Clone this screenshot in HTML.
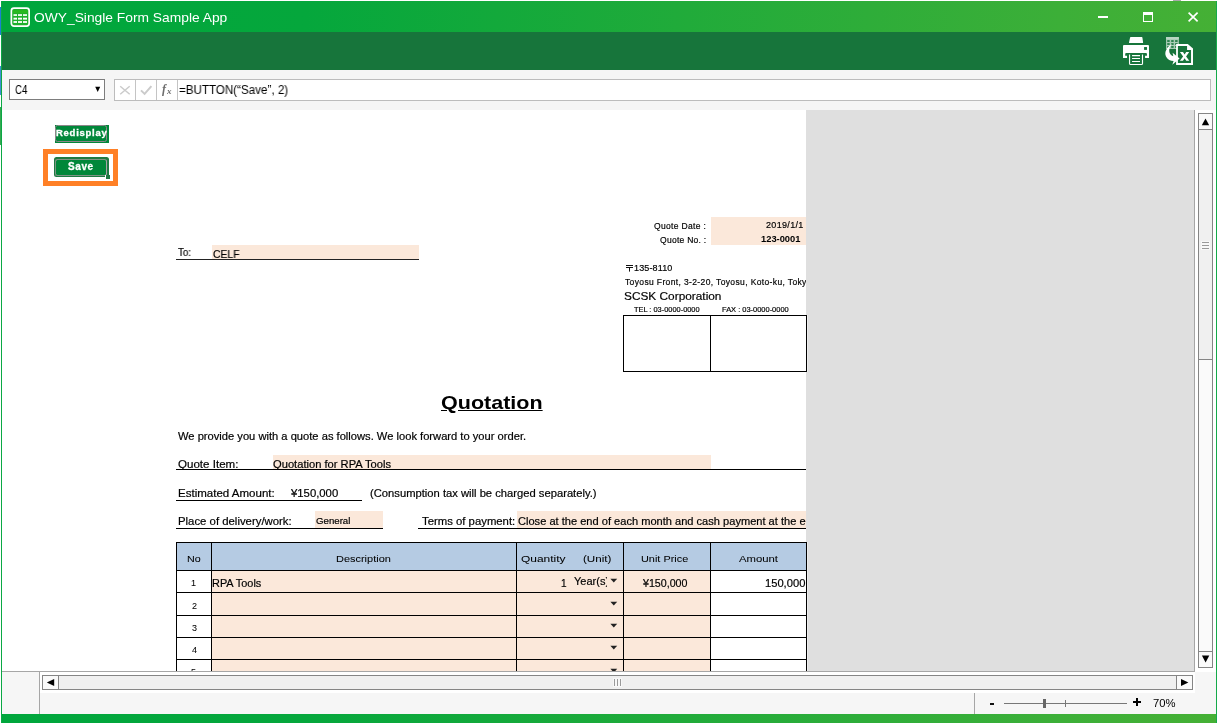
<!DOCTYPE html>
<html lang="en">
<head>
<meta charset="utf-8">
<title>OWY_Single Form Sample App</title>
<style>
html,body{margin:0;padding:0;}
body{width:1218px;height:725px;position:relative;overflow:hidden;background:#fff;
  font-family:"Liberation Sans",sans-serif;color:#000;}
.a{position:absolute;}
.t{position:absolute;white-space:nowrap;transform-origin:0 50%;display:block;will-change:transform;}
.clip{position:absolute;overflow:hidden;}
.clip .t{position:absolute;}
/* window chrome */
#title{left:1px;top:1px;width:1216px;height:31px;
  background:linear-gradient(to right,#00a63c 0%,#05a73c 25%,#3caf38 87%,#45b035 100%);}
#ribbon{left:2px;top:32px;width:1214px;height:38px;background:#17753b;}
#fbar{left:2px;top:70px;width:1214px;height:40px;background:#f5f5f5;}
#lborder{left:1px;top:1px;width:1px;height:722px;background:#0aa844;}
#rborder{left:1216px;top:1px;width:1px;height:722px;background:#14aa4a;}
#bottom{left:2px;top:672px;width:1214px;height:42px;background:#f6f6f6;}
#status{left:1px;top:714px;width:1216px;height:9px;
  background:linear-gradient(to right,#00a63c 0%,#05a73c 25%,#3caf38 87%,#45b035 100%);}
/* sheet */
#sheet{left:2px;top:110px;width:1192px;height:561px;overflow:hidden;background:#fff;}
#sheetin{left:-2px;top:-110px;width:1218px;height:725px;}
#gray{left:806px;top:110px;width:388px;height:561px;background:#dfdfdf;}
.pe{background:#fbe8da;}
.ln{background:#000;}
.sb{background:#fafafa;border:1px solid #858585;box-sizing:border-box;}
.th{background:#f0f0f0;border:1px solid #858585;box-sizing:border-box;}
</style>
</head>
<body>
<!-- ======================= sheet viewport ======================= -->
<div class="a" id="sheet"><div class="a" id="sheetin">

<!-- buttons -->
<div class="a" style="left:55px;top:125px;width:54px;height:18px;background:#01873a"></div>
<div class="a" style="left:55px;top:125px;width:52px;height:17px;box-sizing:border-box;border:1px solid #8d868a;border-radius:2.5px"></div>
<div class="a" style="left:43px;top:149px;width:75px;height:37px;box-sizing:border-box;border:5px solid #ff8026;background:#fff"></div>
<div class="a" style="left:53.5px;top:157.3px;width:55.8px;height:20.1px;background:#1f7a43;border-radius:2.5px"></div>
<div class="a" style="left:55px;top:159px;width:52.4px;height:17.2px;box-sizing:border-box;border:1px solid #7f9487;border-right-color:#a9a3a8;border-radius:2.5px;background:#01873a"></div>
<div class="a" style="left:105.4px;top:174.5px;width:5px;height:5px;background:#fff"></div>
<div class="a" style="left:106.2px;top:175.3px;width:3.8px;height:3.7px;background:#217844"></div>

<!-- To: -->
<div class="a pe" style="left:212px;top:245px;width:207px;height:14px"></div>
<div class="a ln" style="left:176px;top:259px;width:243px;height:1px;background:#222"></div>

<!-- quote date / no -->
<div class="a pe" style="left:711px;top:217px;width:96px;height:28px"></div>

<!-- stamp box -->
<div class="a" style="left:623px;top:315px;width:184px;height:57px;box-sizing:border-box;border:1px solid #000"></div>
<div class="a ln" style="left:710px;top:315px;width:1px;height:57px"></div>

<!-- quote item -->
<div class="a pe" style="left:273px;top:455px;width:438px;height:14px"></div>
<div class="a ln" style="left:176px;top:469px;width:631px;height:1px"></div>
<!-- estimated amount -->
<div class="a ln" style="left:176px;top:500px;width:186px;height:1px"></div>
<!-- place / terms -->
<div class="a pe" style="left:315px;top:511px;width:68px;height:17px"></div>
<div class="a ln" style="left:176px;top:528px;width:207px;height:1px"></div>
<div class="a pe" style="left:517px;top:511px;width:290px;height:17px"></div>
<div class="a ln" style="left:418px;top:528px;width:389px;height:1px"></div>

<!-- table fills -->
<div class="a" style="left:176px;top:542px;width:631px;height:29px;background:#b5cbe3"></div>
<div class="a pe" style="left:211px;top:570px;width:500px;height:120px"></div>
<!-- table lines: horizontal -->
<div class="a ln" style="left:176px;top:542px;width:631px;height:1px"></div>
<div class="a ln" style="left:176px;top:570px;width:631px;height:1px"></div>
<div class="a ln" style="left:176px;top:592px;width:631px;height:1px"></div>
<div class="a ln" style="left:176px;top:615px;width:631px;height:1px"></div>
<div class="a ln" style="left:176px;top:637px;width:631px;height:1px"></div>
<div class="a ln" style="left:176px;top:659px;width:631px;height:1px"></div>
<!-- table lines: vertical -->
<div class="a ln" style="left:176px;top:542px;width:1px;height:150px"></div>
<div class="a ln" style="left:211px;top:542px;width:1px;height:150px"></div>
<div class="a ln" style="left:516px;top:542px;width:1px;height:150px"></div>
<div class="a ln" style="left:623px;top:542px;width:1px;height:150px"></div>
<div class="a ln" style="left:710px;top:542px;width:1px;height:150px"></div>
<div class="a ln" style="left:806px;top:542px;width:1px;height:150px"></div>
<!-- dropdown arrows -->
<svg class="a" style="left:610px;top:578px" width="8" height="6" viewBox="0 0 8 6"><path d="M0.4 0.8 H7.2 L3.8 4.6 Z" fill="#222"/></svg>
<svg class="a" style="left:610px;top:601px" width="8" height="6" viewBox="0 0 8 6"><path d="M0.4 0.8 H7.2 L3.8 4.6 Z" fill="#222"/></svg>
<svg class="a" style="left:610px;top:623px" width="8" height="6" viewBox="0 0 8 6"><path d="M0.4 0.8 H7.2 L3.8 4.6 Z" fill="#222"/></svg>
<svg class="a" style="left:610px;top:645px" width="8" height="6" viewBox="0 0 8 6"><path d="M0.4 0.8 H7.2 L3.8 4.6 Z" fill="#222"/></svg>
<svg class="a" style="left:610px;top:668px" width="8" height="6" viewBox="0 0 8 6"><path d="M0.4 0.8 H7.2 L3.8 4.6 Z" fill="#222"/></svg>
<!-- postal mark -->
<svg class="a" style="left:625px;top:264px" width="9" height="8" viewBox="0 0 9 8"><path d="M1 1.5H8M1 3.5H8M4.5 3.5V7.6" stroke="#111" stroke-width="1" fill="none"/></svg>

<span class="t" id="t4" style="left:56.02px;top:127.76px;font-size:9.5px;line-height:9.5px;font-weight:700;color:#fff;-webkit-text-stroke:0.3px #fff;letter-spacing:0.731px">Redisplay</span>
<span class="t" id="t5" style="left:67.98px;top:161.53px;font-size:10px;line-height:10px;font-weight:700;color:#fff;-webkit-text-stroke:0.3px #fff;letter-spacing:0.600px">Save</span>
<span class="t" id="t6" style="left:177.52px;top:247.73px;font-size:10px;line-height:10px;-webkit-text-stroke:0.18px #000;transform:scaleX(0.9679)">To:</span>
<span class="t" id="t7" style="left:213.00px;top:249.11px;font-size:10.5px;line-height:10.5px;-webkit-text-stroke:0.18px #000;transform:scaleX(0.9843)">CELF</span>
<span class="t" id="t8" style="left:653.52px;top:221.70px;font-size:8.5px;line-height:8.5px;-webkit-text-stroke:0.18px #000;letter-spacing:0.327px">Quote Date :</span>
<span class="t" id="t9" style="left:660.00px;top:235.80px;font-size:8.5px;line-height:8.5px;-webkit-text-stroke:0.18px #000;letter-spacing:0.270px">Quote No. :</span>
<span class="t" id="t10" style="left:766.04px;top:221.48px;font-size:9px;line-height:9px;-webkit-text-stroke:0.18px #000;letter-spacing:0.321px">2019/1/1</span>
<span class="t" id="t11" style="left:761.16px;top:235.38px;font-size:9px;line-height:9px;font-weight:700;transform:scaleX(1.0368)">123-0001</span>
<span class="t" id="t12" style="left:634.06px;top:264.28px;font-size:9px;line-height:9px;-webkit-text-stroke:0.18px #000;letter-spacing:0.129px">135-8110</span>
<div class="clip" style="left:625.04px;top:275.60px;width:180.96px;height:14.5px"><span class="t" id="t13" style="left:0;top:2px;font-size:8.5px;line-height:8.5px;-webkit-text-stroke:0.18px #000;letter-spacing:0.366px">Toyosu Front, 3-2-20, Toyosu, Koto-ku, Tokyo</span></div>
<span class="t" id="t14" style="left:624.14px;top:290.66px;font-size:10.8px;line-height:10.8px;-webkit-text-stroke:0.18px #000;transform:scaleX(1.0972)">SCSK Corporation</span>
<span class="t" id="t15" style="left:634.00px;top:305.97px;font-size:7px;line-height:7px;-webkit-text-stroke:0.18px #000;transform:scaleX(1.0581)">TEL : 03-0000-0000</span>
<span class="t" id="t16" style="left:722.00px;top:305.97px;font-size:7px;line-height:7px;-webkit-text-stroke:0.18px #000;transform:scaleX(1.0644)">FAX : 03-0000-0000</span>
<span class="t" id="t17" style="left:441.14px;top:393.32px;font-size:19px;line-height:19px;font-weight:700;text-decoration:underline;transform:scaleX(1.1330)">Quotation</span>
<span class="t" id="t18" style="left:178.46px;top:432.24px;font-size:10px;line-height:10px;-webkit-text-stroke:0.18px #000;transform:scaleX(1.1157)">We provide you with a quote as follows. We look forward to your order.</span>
<span class="t" id="t19" style="left:178.00px;top:460.04px;font-size:10px;line-height:10px;-webkit-text-stroke:0.18px #000;transform:scaleX(1.1562)">Quote Item:</span>
<span class="t" id="t20" style="left:273.04px;top:460.04px;font-size:10px;line-height:10px;-webkit-text-stroke:0.18px #000;transform:scaleX(1.1157)">Quotation for RPA Tools</span>
<span class="t" id="t21" style="left:177.60px;top:489.14px;font-size:10px;line-height:10px;-webkit-text-stroke:0.18px #000;transform:scaleX(1.1520)">Estimated Amount:</span>
<span class="t" id="t22" style="left:290.52px;top:489.14px;font-size:10px;line-height:10px;-webkit-text-stroke:0.18px #000;transform:scaleX(1.1319)">¥150,000</span>
<span class="t" id="t23" style="left:369.62px;top:489.14px;font-size:10px;line-height:10px;-webkit-text-stroke:0.18px #000;transform:scaleX(1.1209)">(Consumption tax will be charged separately.)</span>
<span class="t" id="t24" style="left:177.60px;top:517.13px;font-size:10px;line-height:10px;-webkit-text-stroke:0.18px #000;transform:scaleX(1.1365)">Place of delivery/work:</span>
<span class="t" id="t25" style="left:315.98px;top:517.48px;font-size:9px;line-height:9px;-webkit-text-stroke:0.18px #000;transform:scaleX(1.0737)">General</span>
<span class="t" id="t26" style="left:421.52px;top:517.13px;font-size:10px;line-height:10px;-webkit-text-stroke:0.18px #000;transform:scaleX(1.1334)">Terms of payment:</span>
<span class="t" id="t27" style="left:517.52px;top:517.13px;font-size:10px;line-height:10px;-webkit-text-stroke:0.18px #000;transform:scaleX(1.1077)">Close at the end of each month and cash payment at the e</span>
<span class="t" id="t28" style="left:186.64px;top:553.76px;font-size:9.5px;line-height:9.5px;-webkit-text-stroke:0.05px #000;transform:scaleX(1.1254)">No</span>
<span class="t" id="t29" style="left:335.62px;top:553.76px;font-size:9.5px;line-height:9.5px;-webkit-text-stroke:0.05px #000;transform:scaleX(1.1536)">Description</span>
<span class="t" id="t30" style="left:521.14px;top:553.76px;font-size:9.5px;line-height:9.5px;-webkit-text-stroke:0.05px #000;transform:scaleX(1.2579)">Quantity</span>
<span class="t" id="t31" style="left:582.60px;top:553.76px;font-size:9.5px;line-height:9.5px;-webkit-text-stroke:0.05px #000;transform:scaleX(1.2248)">(Unit)</span>
<span class="t" id="t32" style="left:641.16px;top:553.76px;font-size:9.5px;line-height:9.5px;-webkit-text-stroke:0.05px #000;transform:scaleX(1.1467)">Unit Price</span>
<span class="t" id="t33" style="left:739.00px;top:553.76px;font-size:9.5px;line-height:9.5px;-webkit-text-stroke:0.05px #000;transform:scaleX(1.1914)">Amount</span>
<span class="t" id="t34" style="left:191.10px;top:579.28px;font-size:9px;line-height:9px;-webkit-text-stroke:0.05px #000;transform:scaleX(1.0000)">1</span>
<span class="t" id="t35" style="left:212.16px;top:579.24px;font-size:10px;line-height:10px;-webkit-text-stroke:0.18px #000;transform:scaleX(1.0907)">RPA Tools</span>
<span class="t" id="t36" style="left:560.58px;top:579.24px;font-size:10px;line-height:10px;-webkit-text-stroke:0.18px #000;transform:scaleX(1.0000)">1</span>
<div class="clip" style="left:574.46px;top:573.69px;width:32.54px;height:17px"><span class="t" id="t37" style="left:0;top:2px;font-size:11px;line-height:11px;-webkit-text-stroke:0.18px #000;transform:scaleX(1.0008)">Year(s)</span></div>
<span class="t" id="t38" style="left:642.96px;top:579.24px;font-size:10px;line-height:10px;-webkit-text-stroke:0.18px #000;transform:scaleX(1.0662)">¥150,000</span>
<span class="t" id="t39" style="left:764.60px;top:579.24px;font-size:10px;line-height:10px;-webkit-text-stroke:0.18px #000;transform:scaleX(1.1160)">150,000</span>
<span class="t" id="t40" style="left:191.52px;top:602.08px;font-size:9px;line-height:9px;-webkit-text-stroke:0.05px #000;transform:scaleX(1.0000)">2</span>
<span class="t" id="t41" style="left:191.52px;top:623.98px;font-size:9px;line-height:9px;-webkit-text-stroke:0.05px #000;transform:scaleX(1.0000)">3</span>
<span class="t" id="t42" style="left:191.50px;top:646.08px;font-size:9px;line-height:9px;-webkit-text-stroke:0.05px #000;transform:scaleX(1.0000)">4</span>
<span class="t" id="t43" style="left:190.62px;top:667.58px;font-size:9px;line-height:9px;-webkit-text-stroke:0.05px #000;transform:scaleX(1.0000)">5</span>
<div class="a" id="gray"></div>

<div class="a" style="left:807px;top:315px;width:1px;height:57px;background:#ececec"></div>
<div class="a ln" style="left:806px;top:315px;width:1px;height:57px"></div>
<div class="a" style="left:807px;top:542px;width:1px;height:129px;background:#ececec"></div>
<div class="a ln" style="left:806px;top:542px;width:1px;height:129px"></div>

</div></div>

<!-- ======================= window chrome ======================= -->
<div class="a" id="title"></div>
<div class="a" id="ribbon"></div>
<div class="a" id="fbar"></div>
<div class="a" id="bottom"></div>
<div class="a" id="status"></div>
<div class="a" id="lborder"></div>
<div class="a" id="rborder"></div>

<div class="a" style="left:1173px;top:0;width:8px;height:1px;background:#a9a9a9"></div>
<div class="a" style="left:0;top:7px;width:1px;height:28px;background:#1a80d2"></div>
<div class="a" style="left:0;top:66px;width:1px;height:29px;background:#3f8fd0"></div>
<div class="a" style="left:0;top:107px;width:1px;height:38px;background:#35a852"></div>
<!-- app icon -->
<svg class="a" style="left:9px;top:6px" width="23" height="23" viewBox="0 0 23 23">
<rect x="2.35" y="2.15" width="17.8" height="17.9" rx="2.6" fill="#1fb02c" stroke="#fff" stroke-width="1.7"/>
<rect x="3.95" y="4.3" width="14.45" height="2.9" fill="#2ab81f"/>
<g fill="#fff"><rect x="4.5" y="8.2" width="3.5" height="1.7"/><rect x="9" y="8.2" width="4" height="1.7"/><rect x="14" y="8.2" width="4" height="1.7"/>
<rect x="4.5" y="11.7" width="3.5" height="1.9"/><rect x="9" y="11.7" width="4" height="1.9"/><rect x="14" y="11.7" width="4" height="1.9"/>
<rect x="4.5" y="15.1" width="3.5" height="1.8"/><rect x="9" y="15.1" width="4" height="1.8"/><rect x="14" y="15.1" width="4" height="1.8"/></g>
</svg>
<!-- window controls -->
<div class="a" style="left:1098px;top:16px;width:10px;height:2px;background:#fff"></div>
<div class="a" style="left:1143px;top:12px;width:10px;height:10px;box-sizing:border-box;border:1px solid #fff;border-top-width:3px"></div>
<svg class="a" style="left:1186px;top:10px" width="14" height="14" viewBox="0 0 14 14"><path d="M2.6 2.7L11.6 11.3M11.6 2.7L2.6 11.3" stroke="#fff" stroke-width="1.7" fill="none"/></svg>
<!-- printer -->
<svg class="a" style="left:1118px;top:33px" width="36" height="36" viewBox="0 0 36 36">
<path d="M12.7 4H23.8Q24.3 4 24.4 4.5L25.1 9.4Q25.1 9.9 24.6 9.9H11.5Q11 9.9 11 9.4L12.1 4.5Q12.2 4 12.7 4Z" fill="#fff"/>
<path d="M6 11.9H30a1 1 0 0 1 1 1V25H27.06V22.8H28.95V21.1a1 1 0 0 0-1-1H8.2a1 1 0 0 0-1 1V22.8H9.04V25H5V12.9a1 1 0 0 1 1-1Z" fill="#fff"/>
<rect x="26.07" y="14.05" width="2.9" height="2.85" fill="#17753b"/>
<path d="M11.55 21.6V30.4a1.1 1.1 0 0 0 1.1 1.1H23.4a1.1 1.1 0 0 0 1.1-1.1V21.6" stroke="#fff" stroke-width="1.15" fill="none"/>
<path d="M14.05 22.6H22M14.05 25.55H22M14.05 28.55H22" stroke="#fff" stroke-width="1.1" fill="none"/>
</svg>
<!-- excel export -->
<svg class="a" style="left:1160px;top:33px" width="36" height="36" viewBox="0 0 36 36">
<rect x="6.06" y="4.07" width="12.8" height="11.9" fill="#a9cdb6"/>
<rect x="6.06" y="4.07" width="12.8" height="2.1" fill="#b9d6c3"/>
<g fill="#17753b"><rect x="7.2" y="7.2" width="2.5" height="1.65"/><rect x="11.2" y="7.2" width="2.45" height="1.65"/><rect x="15.1" y="7.2" width="2.5" height="1.65"/>
<rect x="7.2" y="10.2" width="2.5" height="1.6"/><rect x="11.2" y="10.2" width="2.45" height="1.6"/><rect x="15.1" y="10.2" width="2.5" height="1.6"/>
<rect x="7.2" y="13.15" width="2.5" height="1.65"/><rect x="11.2" y="13.15" width="2.45" height="1.65"/><rect x="15.1" y="13.15" width="2.5" height="1.65"/></g>
<path d="M16.1 11H27.8L33 15.4V32H16.1Z" fill="#fff"/>
<path d="M17.9 13H27.06V16.9H31.03V30.04H17.9Z" fill="#17753b"/>
<path d="M19.9 19.1H23L24.6 21.6L26.2 19.1H29.2L26.1 23.4L29.3 27.8H26.2L24.6 25.2L23 27.8H19.9L23.1 23.4Z" fill="#fff"/>
<path d="M11.8 11C7 14 4 19 6 23.5C7.5 26.6 10.5 28 13.6 28.1L12.3 31.8L19.6 25.6L12.6 19.8L13.3 23.3C11 22.6 9.3 20.6 9.2 18C9.1 15.5 10.2 13 11.8 11Z" fill="#fff"/>
</svg>
<!-- name box -->
<div class="a" style="left:9px;top:79px;width:96px;height:21px;box-sizing:border-box;border:1px solid #7d7d7d;background:#fff"></div>
<svg class="a" style="left:94px;top:86px" width="8" height="8" viewBox="0 0 8 8"><path d="M1.2 0.8H6.2L3.7 6.1Z" fill="#000"/></svg>
<!-- formula box -->
<div class="a" style="left:114px;top:79px;width:1097px;height:22px;box-sizing:border-box;border:1px solid #bcbcbc;background:#fff"></div>
<div class="a" style="left:135px;top:80px;width:1px;height:20px;background:#c4c4c4"></div>
<div class="a" style="left:156px;top:80px;width:1px;height:20px;background:#c4c4c4"></div>
<div class="a" style="left:177px;top:80px;width:1px;height:20px;background:#c4c4c4"></div>
<svg class="a" style="left:118px;top:84px" width="14" height="13" viewBox="0 0 14 13"><path d="M2.2 2.2L11.7 10.2M11.7 2.2L2.2 10.2" stroke="#cbcbcb" stroke-width="1.5" fill="none"/></svg>
<svg class="a" style="left:139px;top:84px" width="14" height="13" viewBox="0 0 14 13"><path d="M2 6.4L5.6 9.9L12.4 2.2" stroke="#cbcbcb" stroke-width="2" fill="none"/></svg>
<span class="a" id="fxf" style="left:162.3px;top:81.5px;font:italic 700 12px/14px 'Liberation Serif',serif;color:#6e6e6e;will-change:transform">f</span>
<span class="a" id="fxx" style="left:166.8px;top:85.5px;font:italic 700 9px/10px 'Liberation Serif',serif;color:#6e6e6e;will-change:transform">x</span>

<!-- sheet frame lines -->
<div class="a" style="left:2px;top:671px;width:1193px;height:1px;background:#a6a6a6"></div>
<div class="a" style="left:1194px;top:110px;width:1px;height:562px;background:#a6a6a6"></div>
<div class="a" style="left:1195px;top:110px;width:21px;height:562px;background:#fff"></div>
<div class="a" style="left:40px;top:672px;width:1155px;height:21px;background:#fff"></div>
<div class="a" style="left:39px;top:672px;width:1px;height:42px;background:#a6a6a6"></div>

<!-- vertical scrollbar -->
<div class="a sb" style="left:1198px;top:359px;width:15px;height:293px"></div>
<div class="a th" style="left:1198px;top:129px;width:15px;height:231px"></div>
<div class="a sb" style="left:1198px;top:113px;width:15px;height:17px"></div>
<div class="a sb" style="left:1198px;top:651px;width:15px;height:17px"></div>
<svg class="a" style="left:1200px;top:117px" width="11" height="10" viewBox="0 0 11 10"><path d="M5.5 1.4L9.2 8.2H1.8Z" fill="#000"/></svg>
<svg class="a" style="left:1200px;top:654px" width="11" height="10" viewBox="0 0 11 10"><path d="M5.6 8.6L9.3 1.6H1.9Z" fill="#000"/></svg>
<div class="a" style="left:1201px;top:241px;width:9px;height:9px;background:#f8f8f8"></div>
<div class="a" style="left:1202px;top:242px;width:7px;height:1px;background:#9a9a9a"></div>
<div class="a" style="left:1202px;top:245px;width:7px;height:1px;background:#9a9a9a"></div>
<div class="a" style="left:1202px;top:248px;width:7px;height:1px;background:#9a9a9a"></div>

<!-- horizontal scrollbar -->
<div class="a th" style="left:58px;top:675px;width:1119px;height:15px"></div>
<div class="a sb" style="left:42px;top:675px;width:17px;height:15px"></div>
<div class="a sb" style="left:1176px;top:675px;width:17px;height:15px"></div>
<svg class="a" style="left:45px;top:677px" width="11" height="11" viewBox="0 0 11 11"><path d="M1.8 5.6L9.2 2.1V9.1Z" fill="#000"/></svg>
<svg class="a" style="left:1179px;top:677px" width="11" height="11" viewBox="0 0 11 11"><path d="M9.4 5.6L2 2.1V9.1Z" fill="#000"/></svg>
<div class="a" style="left:613px;top:678px;width:9px;height:9px;background:#f8f8f8"></div>
<div class="a" style="left:614px;top:679px;width:1px;height:7px;background:#9a9a9a"></div>
<div class="a" style="left:617px;top:679px;width:1px;height:7px;background:#9a9a9a"></div>
<div class="a" style="left:620px;top:679px;width:1px;height:7px;background:#9a9a9a"></div>

<!-- zoom control -->
<div class="a" style="left:974px;top:693px;width:1px;height:21px;background:#a6a6a6"></div>
<div class="a" style="left:990px;top:703px;width:4px;height:2px;background:#111"></div>
<div class="a" style="left:1004px;top:703px;width:123px;height:1px;background:#777"></div>
<div class="a" style="left:1065px;top:700px;width:1px;height:7px;background:#777"></div>
<div class="a" style="left:1043px;top:699px;width:3px;height:9px;background:#666"></div>
<div class="a" style="left:1133px;top:701px;width:8px;height:2px;background:#000"></div>
<div class="a" style="left:1136px;top:698px;width:2px;height:8px;background:#000"></div>

<span class="t" id="t0" style="left:33.60px;top:11.13px;font-size:13.2px;line-height:13.2px;color:#fff;transform:scaleX(1.0465)">OWY_Single Form Sample App</span>
<span class="t" id="t1" style="left:14.98px;top:84.42px;font-size:12.5px;line-height:12.5px;transform:scaleX(0.7766)">C4</span>
<span class="t" id="t2" style="left:179.10px;top:83.64px;font-size:12px;line-height:12px;transform:scaleX(0.9676)">=BUTTON(“Save”, 2)</span>
<span class="t" id="t3" style="left:1153.08px;top:697.59px;font-size:11px;line-height:11px;transform:scaleX(1.0246)">70%</span>
</body>
</html>
